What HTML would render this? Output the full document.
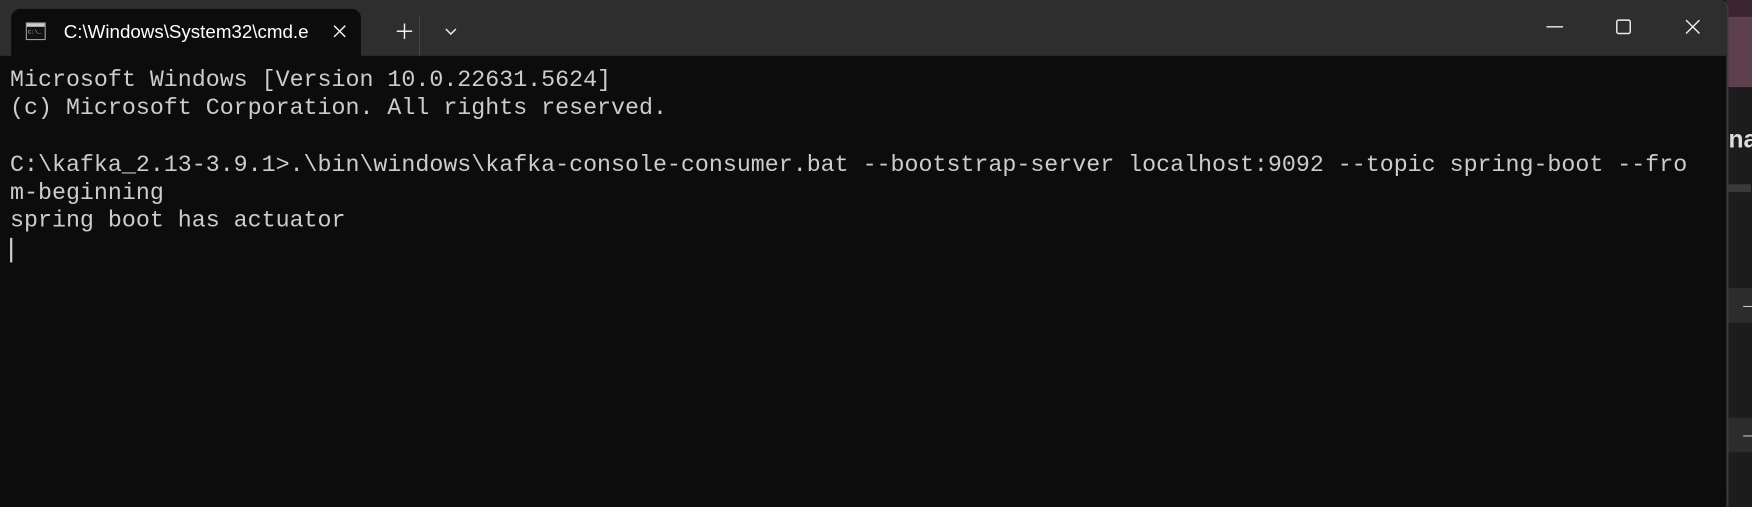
<!DOCTYPE html>
<html><head><style>
body{margin:0;width:1752px;height:507px;background:#1f1f1f;overflow:hidden;font-family:"Liberation Sans",sans-serif}
#s{position:absolute;left:0;top:0;width:1568px;height:454px;transform:scale(1.11735,1.11674);transform-origin:0 0;background:#1f1f1f}
.win{position:absolute;left:0;top:0;width:1545px;height:454px;background:#0c0c0c;border-right:2px solid #3a3a3a;border-top-right-radius:8px;overflow:hidden}
.tb{position:absolute;left:0;top:0;right:0;height:50px;background:#2e2e2e}
.tab{position:absolute;left:10px;top:8px;width:313px;height:42px;background:#0c0c0c;border-radius:8px 8px 0 0}
.tab span{position:absolute;left:47px;top:11px;color:#fff;font-size:16.8px}
.term{position:absolute;left:9px;top:60px;color:#cccccc;font-family:"Liberation Mono",monospace;font-size:20.85px;line-height:25.2px;white-space:pre}
.cur{position:absolute;left:9px;top:213px;width:2px;height:22px;background:#ccc}
</style></head><body><div id="s">
<div style="position:absolute;left:1545px;top:0;width:23px;height:454px;background:#1c1c1c"></div>
<div style="position:absolute;left:1545px;top:0;width:23px;height:15px;background:#3a2530"></div>
<div style="position:absolute;left:1545px;top:15px;width:23px;height:63px;background:#5e3f4e"></div>
<div style="position:absolute;left:1547px;top:112px;color:#ddd;font-size:22px;font-weight:bold">na</div>
<div style="position:absolute;left:1545px;top:165px;width:22px;height:7px;background:#3a3a3a"></div>
<div style="position:absolute;left:1545px;top:258px;width:23px;height:31px;background:#2c2c2c;color:#ccc;font-size:14px;text-align:right;line-height:31px">–</div>
<div style="position:absolute;left:1545px;top:374px;width:23px;height:31px;background:#2c2c2c;color:#ccc;font-size:14px;text-align:right;line-height:31px">–</div>
<div class="win">
<div class="tb">
<div class="tab">
<svg style="position:absolute;left:13px;top:12px" width="18" height="16"><rect x="0.5" y="0.5" width="17" height="15" fill="#111" stroke="#aaa"/><rect x="1" y="1" width="16" height="3" fill="#ccc"/><text x="2" y="10" fill="#ccc" font-size="5" font-family="Liberation Mono">C:\_</text></svg>
<span>C:\Windows\System32\cmd.e</span>
<svg style="position:absolute;left:288px;top:14px" width="12" height="12"><path d="M1 1L11 11M11 1L1 11" stroke="#eee" stroke-width="1.3"/></svg>
</div>
<svg style="position:absolute;left:355px;top:21px" width="14" height="14"><path d="M7 0V14M0 7H14" stroke="#eee" stroke-width="1.3"/></svg>
<div style="position:absolute;left:375px;top:14px;width:1px;height:36px;background:#444"></div>
<svg style="position:absolute;left:398px;top:25px" width="11" height="7"><path d="M1 1L5.5 5.5L10 1" stroke="#eee" stroke-width="1.3" fill="none"/></svg>
<svg style="position:absolute;left:1384px;top:23px" width="15" height="2"><path d="M0 1H15" stroke="#eee" stroke-width="1.3"/></svg>
<svg style="position:absolute;left:1446px;top:17px" width="14" height="14"><rect x="1" y="1" width="12" height="12" rx="1.5" fill="none" stroke="#eee" stroke-width="1.3"/></svg>
<svg style="position:absolute;left:1508px;top:17px" width="14" height="14"><path d="M1 1L13 13M13 1L1 13" stroke="#eee" stroke-width="1.3"/></svg>
</div>
<div class="term">Microsoft Windows [Version 10.0.22631.5624]
(c) Microsoft Corporation. All rights reserved.

C:\kafka_2.13-3.9.1>.\bin\windows\kafka-console-consumer.bat --bootstrap-server localhost:9092 --topic spring-boot --fro
m-beginning
spring boot has actuator</div>
<div class="cur"></div>
</div>
</div></body></html>
